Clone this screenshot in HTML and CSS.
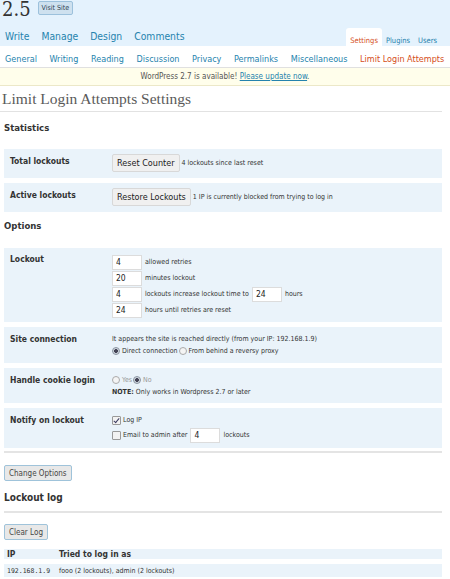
FILE: index.html
```html
<!DOCTYPE html>
<html>
<head>
<meta charset="utf-8">
<link rel="stylesheet" href="styles.css">
</head>
<body>
<div class="head">
  <div class="blog">
    <span class="blog-name">2.5</span>
    <a class="visit">Visit Site</a>
  </div>
  <div class="navrow">
    <ul class="menu">
      <li><a>Write</a></li>
      <li><a>Manage</a></li>
      <li><a>Design</a></li>
      <li><a>Comments</a></li>
    </ul>
    <ul class="tabs">
      <li class="current"><a>Settings</a></li>
      <li><a>Plugins</a></li>
      <li><a>Users</a></li>
    </ul>
  </div>
</div>
<ul class="submenu">
  <li><a>General</a></li>
  <li><a>Writing</a></li>
  <li><a>Reading</a></li>
  <li><a>Discussion</a></li>
  <li><a>Privacy</a></li>
  <li><a>Permalinks</a></li>
  <li><a>Miscellaneous</a></li>
  <li class="current"><a>Limit Login Attempts</a></li>
</ul>
<div class="nag">WordPress 2.7 is available! <a>Please update now</a>.</div>

<div class="wrap">
  <h2 class="page-title">Limit Login Attempts Settings</h2>

  <h3 class="section">Statistics</h3>
  <div class="row stat">
    <div class="th">Total lockouts</div>
    <div class="td"><button class="btn">Reset Counter</button><span class="note">4 lockouts since last reset</span></div>
  </div>
  <div class="row stat">
    <div class="th">Active lockouts</div>
    <div class="td"><button class="btn">Restore Lockouts</button><span class="note">1 IP is currently blocked from trying to log in</span></div>
  </div>

  <h3 class="section opt">Options</h3>
  <div class="row lockout">
    <div class="th">Lockout</div>
    <div class="td">
      <div class="line"><input class="num" value="4"><span class="note">allowed retries</span></div>
      <div class="line"><input class="num" value="20"><span class="note">minutes lockout</span></div>
      <div class="line"><input class="num" value="4"><span class="note">lockouts increase lockout time to</span><input class="num" value="24"><span class="note">hours</span></div>
      <div class="line"><input class="num" value="24"><span class="note">hours until retries are reset</span></div>
    </div>
  </div>
  <div class="row conn">
    <div class="th">Site connection</div>
    <div class="td">
      <div class="tline">It appears the site is reached directly (from your IP: 192.168.1.9)</div>
      <div class="tline"><input type="radio" class="radio" name="c" checked><span>Direct connection</span><input type="radio" class="radio" name="c"><span>From behind a reversy proxy</span></div>
    </div>
  </div>
  <div class="row cookie">
    <div class="th">Handle cookie login</div>
    <div class="td">
      <div class="tline"><input type="radio" class="radio" name="k"><span class="muted">Yes</span><input type="radio" class="radio" name="k" checked><span class="muted">No</span></div>
      <div class="tline"><b>NOTE:</b> Only works in Wordpress 2.7 or later</div>
    </div>
  </div>
  <div class="row notify">
    <div class="th">Notify on lockout</div>
    <div class="td">
      <div class="tline"><input type="checkbox" class="check" checked><span>Log IP</span></div>
      <div class="tline eline"><input type="checkbox" class="check"><span>Email to admin after</span><input class="num" value="4"><span>lockouts</span></div>
    </div>
  </div>
  <div class="sep"></div>
  <button class="btn2 change">Change Options</button>

  <h3 class="section log">Lockout log</h3>
  <div class="sep2"></div>
  <button class="btn2 clear">Clear Log</button>
  <div class="logrow lhead"><span class="c1">IP</span><span class="c2">Tried to log in as</span></div>
  <div class="logrow ldata"><span class="c1 mono">192.168.1.9</span><span class="c2">fooo (2 lockouts), admin (2 lockouts)</span></div>
</div>
</body>
</html>
```

FILE: styles.css
```css
* { box-sizing: border-box; }
body {
  margin: 0;
  font-family: "DejaVu Sans", "Liberation Sans", sans-serif;
  font-stretch: condensed;
  color: #333;
  background: #fff;
  overflow: hidden;
}
ul { list-style: none; margin: 0; padding: 0; }
a { text-decoration: none; }

.head {
  background: #e4f2fd;
  height: 46px;
  display: flex;
  flex-direction: column;
}
.blog {
  height: 28px;
  display: flex;
  align-items: flex-start;
}
.blog-name {
  font-family: "DejaVu Serif", "Liberation Serif", serif;
  font-size: 20px;
  line-height: 18px;
  color: #333;
  margin-left: 2px;
}
.visit {
  margin-left: 7px;
  margin-top: 1px;
  height: 14px;
  padding: 0 3px;
  font-size: 7px;
  line-height: 12px;
  color: #2e4453;
  background: #cee1ef;
  border: 1px solid #9cc1dc;
  border-radius: 2px;
}
.navrow {
  height: 18px;
  display: flex;
  justify-content: space-between;
  align-items: flex-end;
}
.menu {
  display: flex;
  gap: 12px;
  padding-left: 5px;
  padding-bottom: 2px;
}
.menu a {
  font-size: 10.3px;
  line-height: 14px;
  color: #2583ad;
}
.tabs {
  display: flex;
  margin-right: 9px;
}
.tabs li {
  height: 18px;
  padding: 0 4px;
  border-radius: 3px 3px 0 0;
}
.tabs a {
  font-size: 7.5px;
  line-height: 18px;
  color: #2583ad;
}
.tabs .current { background: #fff; }
.tabs .current a { color: #d54e21; }

.submenu {
  display: flex;
  gap: 12.6px;
  height: 22px;
  padding-left: 5px;
  align-items: center;
  border-bottom: 1px solid #e0e0e0;
  white-space: nowrap;
}
.submenu a {
  font-size: 9px;
  color: #2583ad;
}
.submenu .current a { color: #d54e21; }

.nag {
  height: 18px;
  background: #fffeeb;
  border-bottom: 1px solid #ece8c8;
  text-align: center;
  font-size: 8px;
  line-height: 17px;
  color: #555;
}
.nag a { color: #2583ad; text-decoration: underline; }

.wrap { margin-right: 8px; }
.page-title {
  margin: 0;
  font-family: "Liberation Serif", serif;
  font-weight: normal;
  font-size: 15.5px;
  color: #5a5a5a;
  height: 26px;
  line-height: 26px;
  padding-left: 2px;
  border-bottom: 1px solid #e2e2e2;
}
.section {
  margin: 10px 0 0 4px;
  font-size: 9.5px;
  line-height: 12px;
  height: 12px;
  color: #333;
}
.section + .row { margin-top: 15px; }
.section.opt { margin-top: 8px; }
.section.opt + .row { margin-top: 16px; }
.row {
  display: flex;
  background: #eaf3fa;
  margin: 0 0 5px 4px;
}
.th {
  width: 108px;
  flex: none;
  padding-left: 6px;
  font-weight: bold;
  font-size: 8.5px;
  line-height: 10px;
  color: #333;
}
.td {
  flex: 1;
  font-size: 7px;
  color: #333;
  white-space: nowrap;
}
.stat { padding: 5px 0 6px; height: 29px; }
.stat .th { padding-top: 2px; }
.stat .td { display: flex; align-items: center; }
.btn {
  font-family: inherit;
  font-stretch: condensed;
  height: 18px;
  padding: 0 4px;
  font-size: 9px;
  color: #222;
  background: #f0f0f0;
  border: 1px solid #d8d8d8;
  border-radius: 2px;
  margin: 0 2px 0 0;
  white-space: nowrap;
}
.note { font-size: 7px; color: #333; }

.lockout { padding: 6px 0 4px; }
.line { display: flex; align-items: center; height: 16px; }
.num {
  width: 30px;
  height: 15px;
  border: 1px solid #dcdcdc;
  background: #fff;
  font-family: inherit;
  font-stretch: condensed;
  font-size: 8.5px;
  color: #222;
  padding: 0 3px;
  margin: 0 3px 0 0;
  outline: none;
}
.line .note + .num { margin-left: 3px; }

.conn { padding: 6px 0 6px; }
.conn .th { padding-top: 1px; }
.cookie { padding: 6px 0 5px; }
.cookie .th { padding-top: 1px; }
.notify { padding: 6px 0 5px; }
.notify .th { padding-top: 1px; }
.tline { display: flex; align-items: center; height: 12px; }
.tline b { margin-right: 2px; }
.eline { height: 16px; margin-top: 1px; }
.eline .num { margin: 0 3px; }

.radio, .check {
  appearance: none;
  -webkit-appearance: none;
  margin: 0 2px 0 0;
  flex: none;
}
.radio {
  width: 8px;
  height: 8px;
  border-radius: 50%;
  border: 1px solid #aaa;
  background: #f4f4f4;
}
.tline span + .radio { margin-left: 1px; }
.radio:checked {
  background: radial-gradient(circle, #445 0 1.6px, #cfd6de 2.2px);
  border-color: #8b95a2;
}
.muted { color: #999; }
.check {
  width: 9px;
  height: 9px;
  border: 1px solid #999;
  background: #f2f2f2;
  border-radius: 1px;
  position: relative;
}
.check:checked::after {
  content: "";
  position: absolute;
  left: 2px;
  top: 0;
  width: 2px;
  height: 5px;
  border: solid #3a3a60;
  border-width: 0 1.5px 1.5px 0;
  transform: rotate(40deg);
}

.sep {
  height: 2px;
  background: #e4e4e4;
  margin: -2px 0 0 4px;
}
.btn2 {
  display: block;
  font-family: inherit;
  font-stretch: condensed;
  font-size: 8px;
  color: #464646;
  background: #e8e8e8;
  border: 1px solid #9fc3da;
  border-radius: 2px;
  height: 16px;
  padding: 0 4px;
  margin-left: 4px;
  white-space: nowrap;
}
.change { margin-top: 12px; }
.section.log { margin-top: 11px; font-size: 10px; }
.sep2 {
  height: 2px;
  background: #e4e4e4;
  margin: 7px 0 0 4px;
}
.clear { margin-top: 11px; }
.logrow {
  display: flex;
  background: #eaf3fa;
  margin-left: 4px;
  align-items: center;
  white-space: nowrap;
}
.lhead { margin-top: 9px; height: 10px; font-weight: bold; font-size: 8.5px; }
.ldata { margin-top: 5px; height: 13px; font-size: 7px; }
.c1 { width: 55px; padding-left: 3px; }
.mono { font-family: "DejaVu Sans Mono", "Liberation Mono", monospace; font-size: 6.5px; }
```
